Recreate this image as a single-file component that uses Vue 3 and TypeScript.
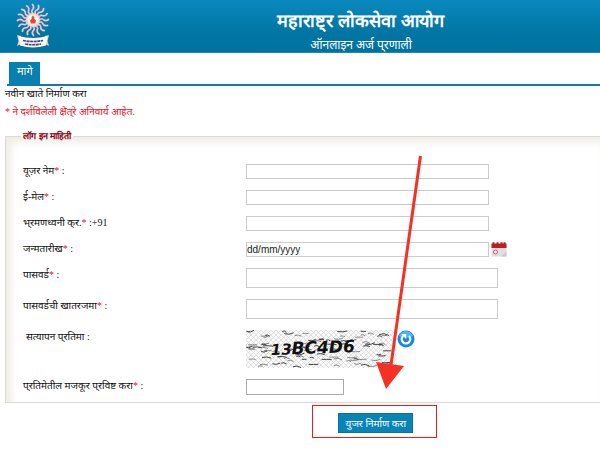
<script setup lang="ts">
interface Dash {
  d: string
  w: number
}

const rays: number[] = Array.from({ length: 16 }, (_, i) => i * 22.5)

// Deterministic pseudo random numbers keep the captcha noise stable between renders.
let seed = 11
function rnd(): number {
  seed = (seed * 16807) % 2147483647
  return seed / 2147483647
}
const dashes: Dash[] = Array.from({ length: 100 }, () => {
  const x = Math.round(rnd() * 1440) / 10
  const y = Math.round(rnd() * 360 + 10) / 10
  const l = Math.round(rnd() * 60 + 40) / 10
  const s = Math.round(rnd() * 40 - 20) / 10
  return { d: `M${x} ${y}q${l / 2} ${-s} ${l} ${s / 2}`, w: rnd() > 0.5 ? 1 : 0.6 }
})
</script>

<template>
  <div class="page">
    <header class="banner">
      <svg class="logo" viewBox="0 0 34 46" aria-hidden="true">
        <g fill="none" stroke="#f3c3c8" stroke-width="1.7" stroke-linecap="round">
          <path
            v-for="r in rays"
            :key="r"
            d="M17 11.500q-2.500-2 0-4.500q1.500-2-.5-4.500"
            :transform="`rotate(${r} 17 18)`"
          />
        </g>
        <circle cx="17" cy="18" r="7" fill="#f7d0d0" />
        <circle cx="17" cy="18" r="5.400" fill="#fff5ec" />
        <path d="M17 13.500l1.500 2-.5 1 2 2-.8 3h-4.400l-.8-3 2-2-.5-1z" fill="#e4453b" />
        <path d="M1 33l4 1v8l-4 2 1.500-5zM33 33l-4 1v8l4 2-1.500-5z" fill="#d8d3c8" />
        <path d="M2.500 34q14.500 4 29 0l-1.500 9.500q-13 4-26 0z" fill="#fff7ed" />
        <path d="M7 38.500q10 2 20 0M9 42q8 1.500 16 0" fill="none" stroke="#39438e" stroke-width="1.700" stroke-dasharray="3 .6" />
      </svg>
      <div class="titles">
        <h1>महाराष्ट्‌र लोकसेवा आयोग</h1>
        <p>ऑनलाइन अर्ज प्‌रणाली</p>
      </div>
    </header>

    <nav class="tabs"><a href="#">मागे</a></nav>

    <main>
      <p class="line">नवीन खाते निर्माण करा</p>
      <p class="line note">* ने दर्शविलेली क्षेत्‌रे अनिवार्य आहेत.</p>

      <form @submit.prevent>
        <fieldset>
          <legend>लॉग इन माहिती</legend>
          <div class="rows">
            <label for="user">यूज़र नेम<b>*</b> :</label>
            <input id="user" type="text" />
            <label for="mail">ई-मेल<b>*</b> :</label>
            <input id="mail" type="text" />
            <label for="mobile">भ्‌रमणध्वनी क्‌र.<b>*</b> :+91</label>
            <input id="mobile" type="text" />
            <label for="dob">जन्मतारीख<b>*</b> :</label>
            <div class="date">
              <input id="dob" type="text" value="dd/mm/yyyy" />
              <button type="button" class="icon calendar" aria-label="दिनदर्शिका">
                <svg viewBox="0 0 16 15">
                  <path d="M.5 4h15v10.500h-15z" fill="#dfdfe1" />
                  <path d="M10 14.500l5.500-5v5z" fill="#c9c9cc" />
                  <path d="M.5 1.500h1V.3h2v1.200h2V.3h2v1.200h2V.3h2v1.200h1V.3h2v1.200h1V6H.5z" fill="#b91f22" />
                  <circle cx="4.500" cy="10" r="2" fill="#f7eeee" stroke="#cf5960" />
                </svg>
              </button>
            </div>
            <label for="pass">पासवर्ड<b>*</b> :</label>
            <input id="pass" class="tall" type="password" />
            <label for="pass2">पासवर्डची खातरजमा<b>*</b> :</label>
            <input id="pass2" class="tall" type="password" />
            <span class="caption">सत्यापन प्‌रतिमा :</span>
            <div class="captcha">
              <svg class="picture" viewBox="0 0 150 38" role="img" aria-label="13BC4D6">
                <defs>
                  <pattern id="mesh" width="5" height="5" patternUnits="userSpaceOnUse">
                    <path d="M0 0l5 5M5 0L0 5" stroke="#cfcfcf" stroke-width=".6" />
                  </pattern>
                </defs>
                <rect width="150" height="38" fill="#fafafa" />
                <rect width="150" height="38" fill="url(#mesh)" />
                <path v-for="(n, i) in dashes" :key="i" :d="n.d" :stroke-width="n.w" fill="none" stroke="#444" />
                <text class="code" x="25" y="25" transform="rotate(-2 25 25)">
                  <tspan class="small">13</tspan><tspan>BC4D6</tspan>
                </text>
              </svg>
              <button type="button" class="icon refresh" aria-label="नवीन प्रतिमा">
                <svg viewBox="0 0 18 18">
                  <circle cx="9" cy="9" r="8.500" fill="#1688e8" />
                  <path d="M2 6a7.500 7.500 0 0 1 14 0q-7 4-14 0z" fill="#55b4f7" />
                  <path d="M6 6a4.300 4.300 0 1 0 6 0" fill="none" stroke="#fff" stroke-width="2.200" />
                  <path d="M4 4h5.200v5z" fill="#fff" />
                </svg>
              </button>
            </div>
            <label for="code">प्‌रतिमेतील मजकूर प्‌रविष्ट करा<b>*</b> :</label>
            <input id="code" class="short" type="text" />
          </div>
        </fieldset>
        <div class="highlight"><button class="submit" type="submit">युजर निर्माण करा</button></div>
      </form>
    </main>

    <svg class="arrow" viewBox="0 0 46 234" aria-hidden="true">
      <path d="M44.500 1L15 210" stroke="#f53126" stroke-width="3" />
      <path d="M0 207l28 4-18 23z" fill="#f53126" />
    </svg>
  </div>
</template>

<style>
body {
  margin: 0;
  background: #fff;
}
</style>

<style scoped>
.page {
  position: relative;
  font-family: "Liberation Serif", "Noto Sans", serif;
  font-size: 10px;
  line-height: 15px;
  color: #111;
}
.banner {
  display: flex;
  box-sizing: border-box;
  height: 53px;
  background: linear-gradient(#0a89be, #0076a4 60%, #0073a0);
  border-bottom: 1px solid #2a86ad;
  color: #fff;
}
.logo {
  width: 34px;
  height: 46px;
  margin: 2px 72px 0 16px;
}
.titles {
  flex: 1;
  text-align: center;
}
h1 {
  margin: 9px 0 0;
  font-family: "Liberation Sans", sans-serif;
  font-size: 18px;
  line-height: 24px;
}
.titles p {
  margin: 4px 0 0;
  font-size: 12px;
  line-height: 16px;
}
.tabs {
  display: flex;
  margin: 9px 0 0 7px;
  padding-left: 2px;
  border-bottom: 2px solid #1279a8;
}
.tabs a {
  padding: 2px 7px 5px 8px;
  background: #0880b2;
  color: #fff;
  font-size: 11px;
  text-decoration: none;
}
main {
  padding-left: 5px;
}
.line {
  margin: 0 0 3px;
}
.note,
b {
  color: #f00d25;
}
b {
  font-weight: normal;
}
fieldset {
  margin: 10px 0 0;
  padding: 0 0 7px 17px;
  border: 1px solid #dcdad2;
  border-right: 0;
  box-shadow: inset 5px 5px 8px #efece5;
}
legend {
  margin-left: -2px;
  padding: 0 2px;
  color: #8b0012;
  font-family: "Liberation Sans", sans-serif;
  font-size: 9px;
  font-weight: bold;
}
.rows {
  display: grid;
  grid-template-columns: 223px 1fr;
  row-gap: 11px;
  align-items: start;
  padding-top: 20px;
}
.rows label,
.caption {
  height: 15px;
  margin-top: -1px;
  white-space: nowrap;
}
.caption {
  padding-left: 3px;
}
input {
  box-sizing: border-box;
  width: 243px;
  height: 15px;
  margin: 0;
  padding: 0;
  border: 1px solid #ccc;
  background: #fff;
  font: 10px/13px "Liberation Sans", sans-serif;
  color: #222;
}
.tall {
  width: 252px;
  height: 20px;
}
.short {
  width: 98px;
  height: 16px;
  border-color: #aaa;
}
.date,
.captcha {
  display: flex;
  align-items: start;
  gap: 2px;
}
.date {
  height: 15px;
}
.icon {
  padding: 0;
  border: 0;
  background: none;
}
.icon svg,
.picture {
  display: block;
}
.calendar {
  width: 16px;
  height: 15px;
}
.picture {
  width: 150px;
  height: 38px;
}
.refresh {
  width: 18px;
  height: 18px;
}
.captcha {
  gap: 1px;
}
.code {
  font: italic bold 17px "DejaVu Sans", sans-serif;
  fill: #111;
}
.small {
  font-size: 15px;
}
.highlight {
  display: flex;
  justify-content: center;
  box-sizing: border-box;
  width: 125px;
  margin: 2px 0 0 calc(52% - 2px);
  padding: 7px 0 4px 2px;
  border: 1px solid #f21a1a;
}
.submit {
  width: 75px;
  height: 20px;
  padding: 0;
  border: 1px solid #0675a3;
  background: #0984b6;
  color: #fff;
  font: inherit;
}
.arrow {
  position: absolute;
  left: 376px;
  top: 155px;
  width: 46px;
  height: 234px;
  pointer-events: none;
}
</style>
